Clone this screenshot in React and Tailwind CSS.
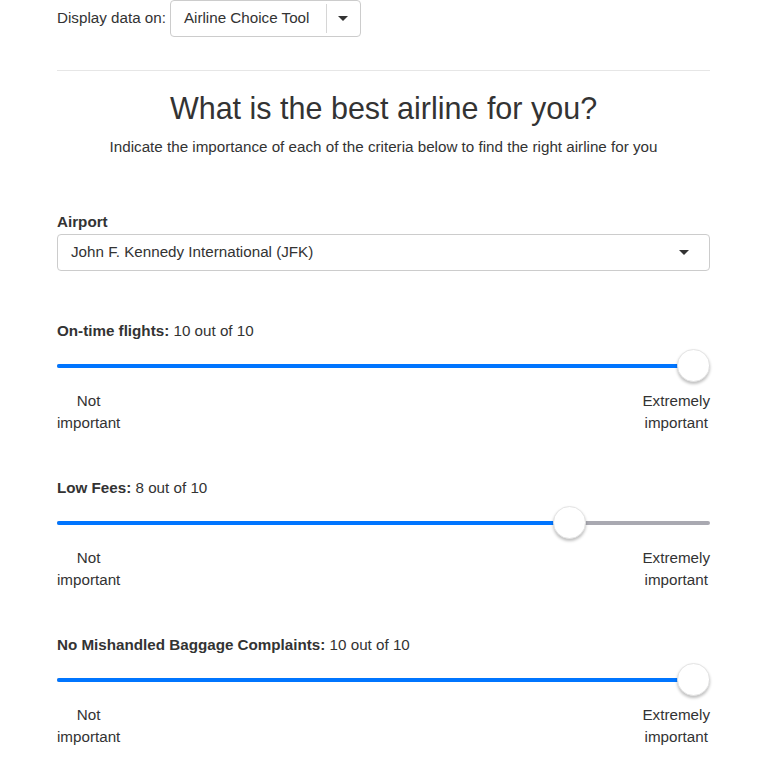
import React from 'react';

// criteria sliders shown on the page
const criteria = [
  { label: 'On-time flights:', value: 10 },
  { label: 'Low Fees:', value: 8 },
  { label: 'No Mishandled Baggage Complaints:', value: 10 },
];

function Caret() {
  return (
    <svg width="10" height="5" viewBox="0 0 10 5" className="fill-[#333]">
      <path d="M0 0 L10 0 L5 5 Z" />
    </svg>
  );
}

function Slider({ label, value }) {
  const frac = value / 10;
  return (
    <div className="flex flex-col">
      <div className="leading-[21px]">
        <span className="font-bold">{label}</span> {value} out of 10
      </div>
      {/* Track + thumb */}
      <div className="relative mt-[8px] h-[33px] flex items-center">
        <div className="w-full h-[4px] rounded-full bg-[#a9a9b1] flex overflow-hidden">
          <div
            className="h-full bg-[#0075ff]"
            style={{ width: `calc(16.5px + ${frac} * (100% - 33px))` }}
          />
        </div>
        <div
          className="absolute top-0 w-[33px] h-[33px] rounded-full bg-white border border-[#e4e4e4] shadow-[0_2px_3px_rgba(0,0,0,0.25)]"
          style={{ left: `calc(${frac} * (100% - 33px))` }}
        />
      </div>
      <div className="mt-[8px] flex justify-between leading-[22px]">
        <div className="text-center">
          Not
          <br />
          important
        </div>
        <div className="text-center">
          Extremely
          <br />
          important
        </div>
      </div>
    </div>
  );
}

export default function App() {
  return (
    <div className="min-h-screen bg-white text-[#333] text-[15.2px] font-['Liberation_Sans',Arial,sans-serif]">
      <div className="ml-[57px] mr-[58px] flex flex-col pb-[30px]">
        {/* Display data on */}
        <div className="flex items-center h-[37px]">
          <span className="mr-[4px]">Display data on:</span>
          <div className="flex items-center h-[37px] w-[191px] border border-[#ccc] rounded-[4px] bg-white">
            <span className="pl-[13px] flex-1">Airline Choice Tool</span>
            <div className="w-px self-stretch my-[3px] bg-[#d6d6d6]" />
            <div className="w-[33px] flex justify-center">
              <Caret />
            </div>
          </div>
        </div>

        <hr className="mt-[33px] border-0 border-t border-[#e6e6e6]" />

        {/* Heading */}
        <h1 className="mt-[21px] text-center text-[30.5px] leading-[33px]">
          What is the best airline for you?
        </h1>
        <p className="mt-[11px] text-center leading-[21px]">
          Indicate the importance of each of the criteria below to find the right airline for you
        </p>

        {/* Airport */}
        <div className="mt-[54px] font-bold leading-[21px]">Airport</div>
        <div className="mt-[2px] h-[37px] flex items-center justify-between border border-[#ccc] rounded-[4px] pl-[13px] pr-[20px]">
          <span>John F. Kennedy International (JFK)</span>
          <Caret />
        </div>

        {/* Criteria sliders */}
        <div className="mt-[49px] flex flex-col gap-[43px]">
          {criteria.map((c) => (
            <Slider key={c.label} label={c.label} value={c.value} />
          ))}
        </div>
      </div>
    </div>
  );
}
